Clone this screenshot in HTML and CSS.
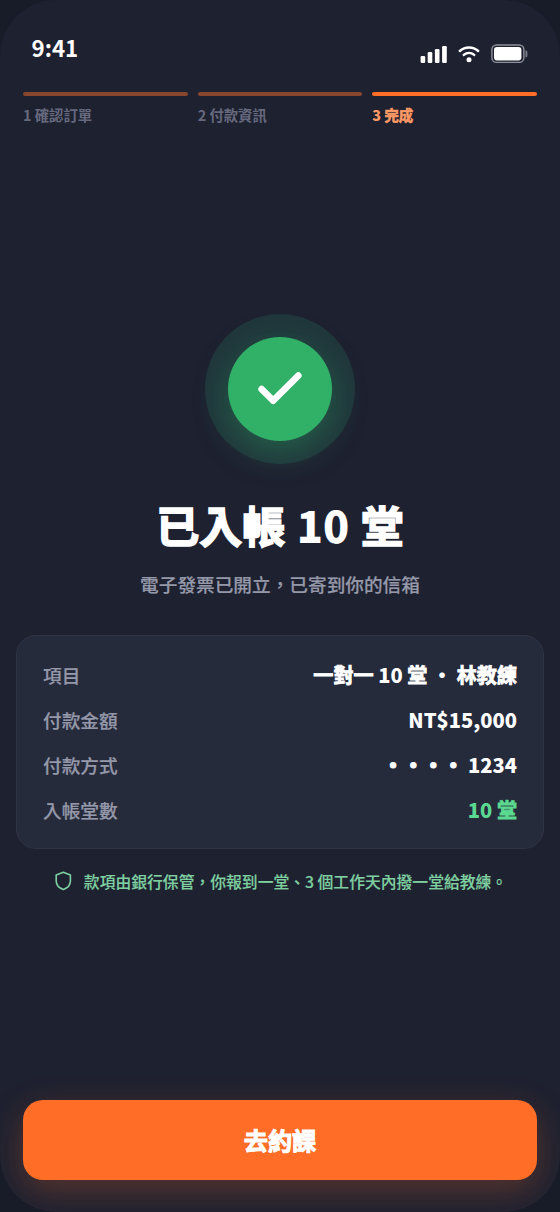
FILE: index.html
```html
<!DOCTYPE html>
<html lang="zh-Hant">
<head>
<meta charset="utf-8">
<title>已入帳</title>
<link rel="stylesheet" href="styles.css">
</head>
<body>
<main class="screen">
  <header class="status">
    <span class="time">9:41</span>
    <div class="status-icons">
      <svg class="signal" width="27" height="18" viewBox="0 0 27 18" fill="#fff"><rect x="0.6" y="11" width="4.6" height="7" rx="1.2"/><rect x="7.7" y="7" width="4.6" height="11" rx="1.2"/><rect x="14.9" y="4" width="4.6" height="14" rx="1.2"/><rect x="22.1" y="1" width="4.7" height="17" rx="1.2"/></svg>
      <svg class="wifi" width="22" height="18" viewBox="0 0 22 18" fill="none" stroke="#fff" stroke-width="2.5" stroke-linecap="round"><path d="M1.8 6C7 1.2 15 1.2 20.2 6"/><path d="M5.8 9.9c3.1-2.5 7.3-2.5 10.4 0"/><circle cx="11" cy="14.8" r="2.5" fill="#fff" stroke="none"/></svg>
      <svg class="battery" width="37" height="20" viewBox="0 0 37 20"><rect x="0.9" y="1" width="32" height="17.4" rx="4.6" fill="none" stroke="#8e909a" stroke-width="1.4"/><rect x="3" y="3.1" width="27.4" height="13.3" rx="2.8" fill="#fff"/><path d="M34.4 6.6h.5a1.5 1.5 0 0 1 1.5 1.5v3.6a1.5 1.5 0 0 1-1.5 1.5h-.5z" fill="#777984"/></svg>
    </div>
  </header>
  <nav class="steps">
    <div class="step">1 確認訂單</div>
    <div class="step">2 付款資訊</div>
    <div class="step active">3 <b>完成</b></div>
  </nav>
  <section class="result">
    <div class="halo"><div class="disc">
      <svg width="104" height="104" viewBox="0 0 104 104" fill="none" stroke="#fff" stroke-width="6.6" stroke-linecap="round" stroke-linejoin="round"><path d="M33.6 52.1 45.2 63.7 70.3 38.6"/></svg>
    </div></div>
    <h1 class="title"><b>已入帳</b> 10 <b>堂</b></h1>
    <p class="subtitle">電子發票已開立，已寄到你的信箱</p>
    <dl class="card">
      <div class="row"><dt>項目</dt><dd><b>一對一</b> 10 <b>堂</b> · <b>林教練</b></dd></div>
      <div class="row"><dt>付款金額</dt><dd>NT$15,000</dd></div>
      <div class="row"><dt>付款方式</dt><dd><span class="mask">••••</span> 1234</dd></div>
      <div class="row"><dt>入帳堂數</dt><dd class="credit">10 <b>堂</b></dd></div>
    </dl>
    <p class="note">
      <svg width="20" height="20" viewBox="0 0 20 20" fill="none" stroke="#7fd0a0" stroke-width="1.6" stroke-linejoin="round"><path d="M10.3 1.3 17.4 3.9V10c0 4.2-3.1 7-7.1 8.5C6.3 17 3.2 14.2 3.2 10V3.9z"/></svg>
      <span>款項由銀行保管，你報到一堂、3 個工作天內撥一堂給教練。</span>
    </p>
  </section>
  <button class="cta"><b>去約課</b></button>
</main>
</body>
</html>
```
FILE: styles.css
```css
* { box-sizing: border-box; }
body { margin: 0; background: #181c29; font-family: "Noto Sans CJK TC", sans-serif; }
b { font-weight: 700; -webkit-text-stroke: 0.04em currentColor; }
.screen { width: 560px; height: 1212px; padding: 0 16px 32px; display: flex; flex-direction: column; background: #1e2130; border-radius: 56px; overflow: hidden; color: #fff; }
.status { height: 92px; padding: 31px 16px 0 15.5px; display: flex; justify-content: space-between; align-items: flex-start; }
.time { font-size: 22.3px; line-height: 32px; font-weight: 700; }
.status-icons { display: flex; gap: 11px; padding-top: 13px; align-items: flex-start; }
.signal { margin-top: 1px; }
.wifi { margin-top: 1px; }
.steps { margin: 0 7px; display: grid; grid-template-columns: repeat(3, 1fr); gap: 10px; }
.step { font-size: 14.36px; line-height: 20px; font-weight: 700; color: #66697e; }
.step::before { content: ""; display: block; height: 4px; margin-bottom: 9px; border-radius: 2px; background: #86472e; }
.step.active { color: #ff9a66; font-weight: 800; }
.step.active::before { background: #ff6d27; }
.result { flex: 1; display: flex; flex-direction: column; align-items: center; padding-top: 189px; }
.halo { width: 150px; height: 150px; border-radius: 50%; display: grid; place-items: center; background: #20363b; }
.disc { width: 104px; height: 104px; border-radius: 50%; background: #31b067; box-shadow: 0 11px 34px rgba(49, 176, 103, .35); }
.disc svg { display: block; }
.title { margin: 29px 0 0; font-size: 43.08px; line-height: 62px; font-weight: 900; word-spacing: 1.6px; }
.subtitle { margin: 15px 0 0; font-size: 18.67px; line-height: 28px; font-weight: 500; color: #9598a9; -webkit-text-stroke: 0.2px currentColor; }
.card { width: 528px; height: 214px; margin: 37px 0 0; padding: 16px 26px; border: 1px solid #303445; border-radius: 20px; background: #262b3c; }
.row { height: 45px; display: flex; justify-content: space-between; align-items: center; font-size: 18.67px; line-height: 27px; }
.row dt { color: #9598a9; font-weight: 500; -webkit-text-stroke: 0.2px currentColor; }
.row dd { margin: 0; font-size: 20.1px; font-weight: 800; }
.mask { -webkit-text-stroke: 0.9px currentColor; }
.row .credit { color: #5bd990; }
.note { margin: 21px 0 0; display: flex; align-items: center; gap: 11px; font-size: 15.8px; line-height: 24px; font-weight: 500; color: #7fd0a0; white-space: nowrap; -webkit-text-stroke: 0.15px currentColor; }
.note svg { margin-top: -2px; }
.cta { margin: 0 7px; height: 80px; padding: 0 0 2px; border: 0; border-radius: 20px; background: #ff6d27; color: #fff; font: 700 24.2px "Noto Sans CJK TC", sans-serif; box-shadow: 0 11px 34px rgba(255, 109, 39, .26); }
```
